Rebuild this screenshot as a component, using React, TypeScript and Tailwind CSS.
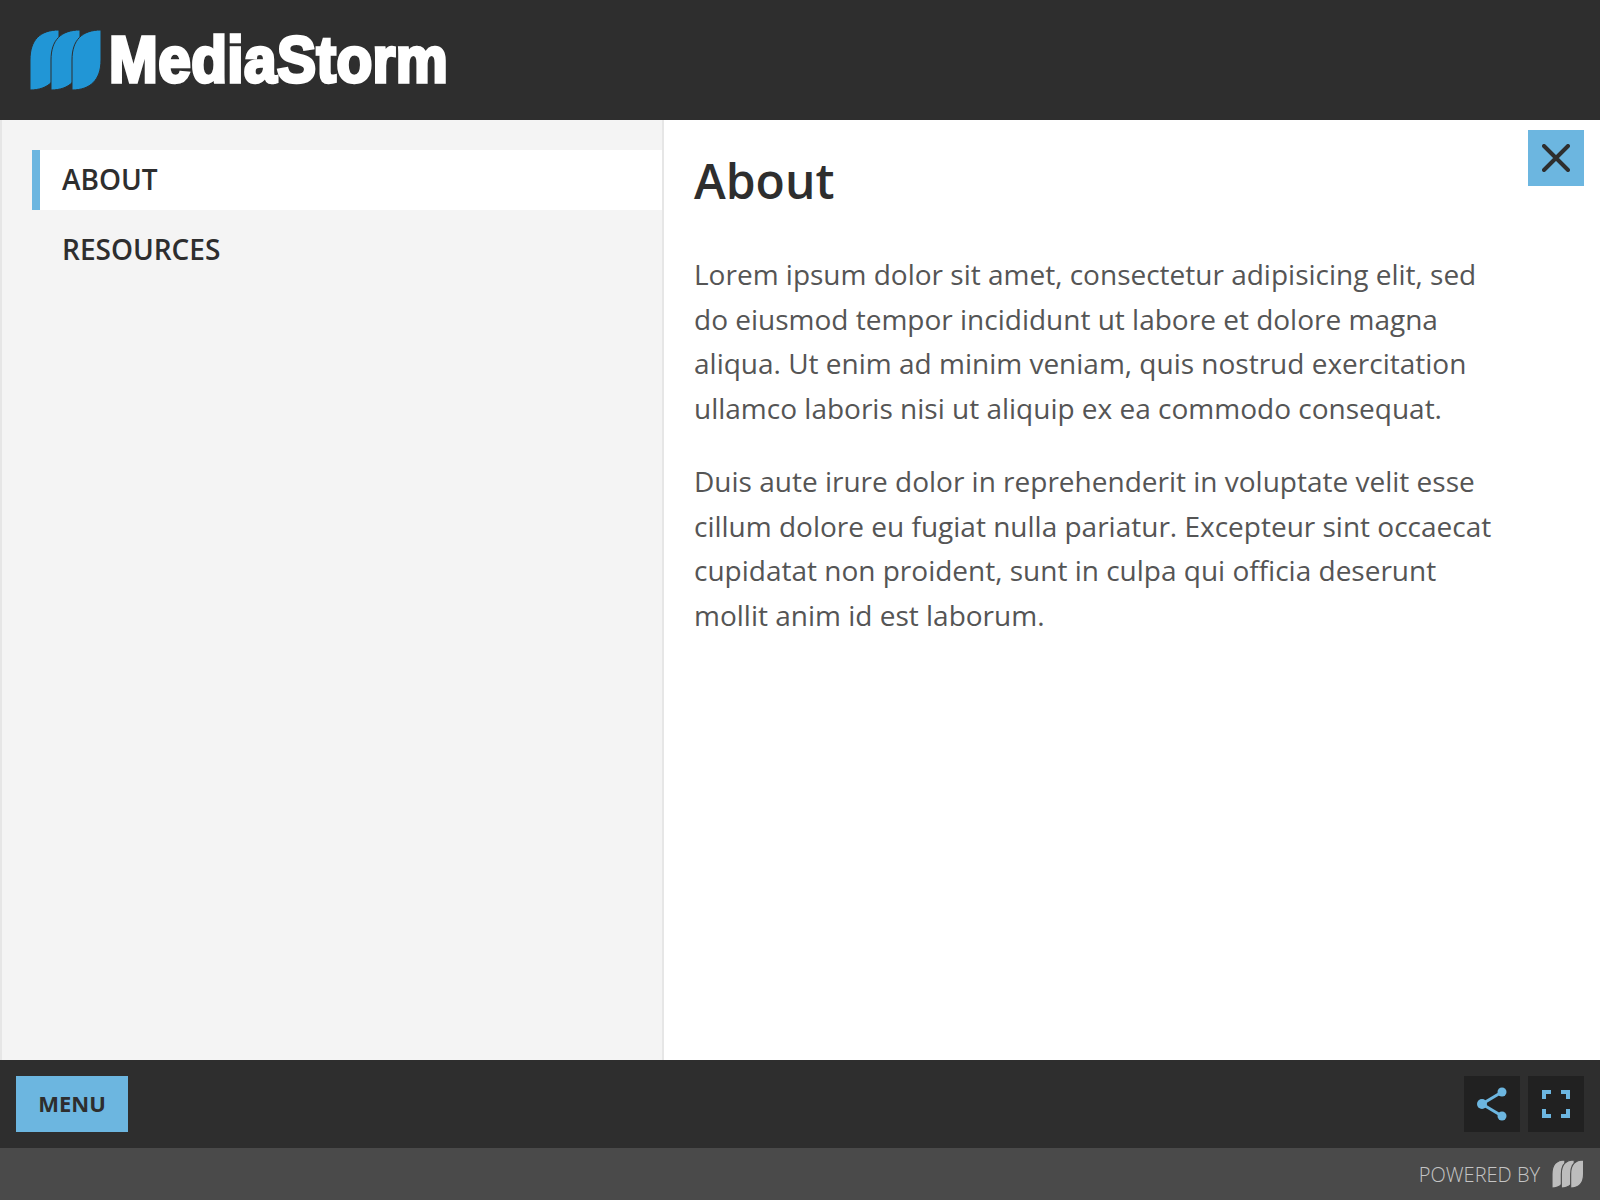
const LEAF = 'M29 0V30C29 50 18 60 0 60V30C0 10 10 0 29 0Z';

function LogoMark({ className, fill, gap, gapWidth = 1 }: { className: string; fill: string; gap: string; gapWidth?: number }) {
  return (
    <svg viewBox="0 0 72 60" preserveAspectRatio="none" className={className}>
      {[0, 21, 42].map((x) => (
        <path key={x} d={LEAF} transform={`translate(${x} 0)`} fill={fill} stroke={gap} strokeWidth={gapWidth} />
      ))}
    </svg>
  );
}

const paragraphs = [
  'Lorem ipsum dolor sit amet, consectetur adipisicing elit, sed do eiusmod tempor incididunt ut labore et dolore magna aliqua. Ut enim ad minim veniam, quis nostrud exercitation ullamco laboris nisi ut aliquip ex ea commodo consequat.',
  'Duis aute irure dolor in reprehenderit in voluptate velit esse cillum dolore eu fugiat nulla pariatur. Excepteur sint occaecat cupidatat non proident, sunt in culpa qui officia deserunt mollit anim id est laborum.',
];

export default function App() {
  return (
    <div className="relative flex h-screen w-full flex-col overflow-hidden bg-white font-['Open_Sans',sans-serif]">
      <header className="flex h-[120px] shrink-0 items-start bg-[#2e2e2e] pl-[30px] pt-[30px]">
        <LogoMark className="h-[60px] w-[72px] shrink-0" fill="#2196d6" gap="#2e2e2e" />
        <span className="ml-[7px] mt-[-6px] origin-left scale-x-[0.9] font-['Liberation_Sans',sans-serif] text-[65px] font-bold leading-[72px] tracking-[0.5px] text-white [-webkit-text-stroke:3.5px_white]">
          MediaStorm
        </span>
      </header>

      <main className="flex min-h-0 flex-1">
        <nav className="w-[664px] shrink-0 border-x-2 border-[#e6e6e6] bg-[#f4f4f4] pl-[30px] pt-[30px]">
          <div className="flex h-[60px] items-center border-l-8 border-[#6cb6e0] bg-white pb-[2px] pl-[22px] text-[28px] font-semibold text-[#2e2e2e]">
            ABOUT
          </div>
          <div className="mt-[10px] flex h-[60px] items-center pb-[2px] pl-[30px] text-[28px] font-semibold text-[#2e2e2e]">
            RESOURCES
          </div>
        </nav>
        <section className="flex-1 pl-[30px] pr-[100px] pt-[27px]">
          <h1 className="text-[48px] font-semibold leading-[68px] text-[#2e2e2e]">About</h1>
          {paragraphs.map((text, i) => (
            <p key={text} className={`${i === 0 ? 'mt-[37px]' : 'mt-[28px]'} text-[28px] leading-[44.7px] text-[#555555]`}>
              {text}
            </p>
          ))}
        </section>
      </main>

      <button className="absolute right-[16px] top-[130px] flex h-[56px] w-[56px] items-center justify-center bg-[#6cb6e0]">
        <svg viewBox="0 0 28 28" className="h-[28px] w-[28px]" fill="none" stroke="#2e2e2e" strokeWidth="4" strokeLinecap="round">
          <path d="M2 2L26 26M26 2L2 26" />
        </svg>
      </button>

      <div className="flex h-[88px] shrink-0 items-center justify-between bg-[#2e2e2e] px-[16px]">
        <button className="flex h-[56px] w-[112px] items-center justify-center bg-[#6cb6e0] pb-[2px] text-[22px] font-bold text-[#2e2e2e]">
          MENU
        </button>
        <div className="flex gap-[8px]">
          <button className="flex h-[56px] w-[56px] items-center justify-center bg-[#212121]">
            <svg viewBox="0 0 32 34" className="h-[34px] w-[32px]" fill="#6cb6e0" stroke="#6cb6e0">
              <path d="M6 17L26 5M6 17L26 29" strokeWidth="3" fill="none" />
              <circle cx="26" cy="5" r="4.500" strokeWidth="0" />
              <circle cx="6" cy="17" r="5" strokeWidth="0" />
              <circle cx="26" cy="29" r="4.500" strokeWidth="0" />
            </svg>
          </button>
          <button className="flex h-[56px] w-[56px] items-center justify-center bg-[#212121]">
            <svg viewBox="0 0 28 28" className="h-[28px] w-[28px]" fill="none" stroke="#6cb6e0" strokeWidth="4">
              <path d="M2 9V2H9M19 2H26V9M26 19V26H19M9 26H2V19" />
            </svg>
          </button>
        </div>
      </div>

      <footer className="flex h-[52px] shrink-0 items-center justify-end bg-[#4a4a4a] pr-[16px]">
        <span className="pt-[2px] text-[20px] font-light text-[#c4c4c4]">POWERED BY</span>
        <LogoMark className="ml-[12px] h-[28px] w-[32px]" fill="#bdbdbd" gap="#4a4a4a" gapWidth={2.5} />
      </footer>
    </div>
  );
}
